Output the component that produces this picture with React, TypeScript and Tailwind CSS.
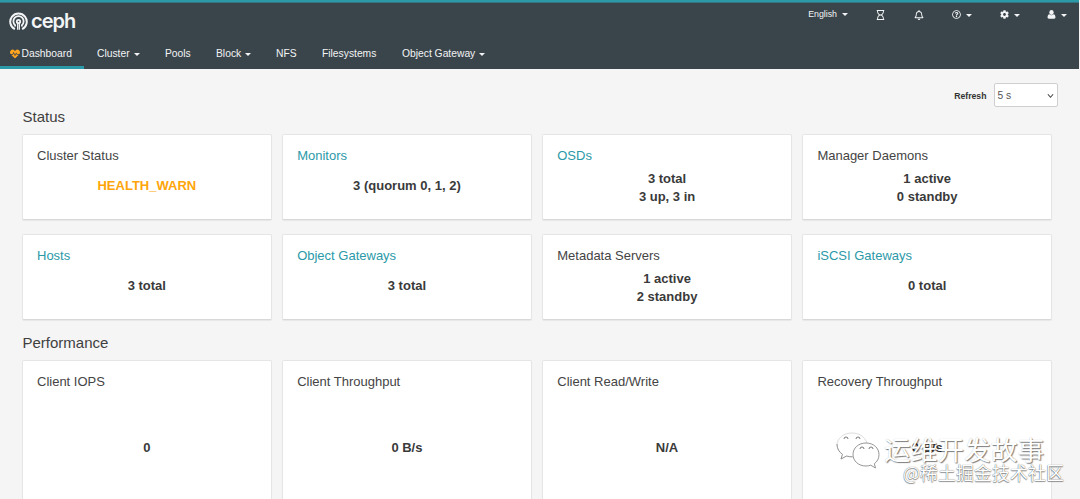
import { ReactNode } from "react";
import { FaCog, FaHeartbeat, FaRegBell, FaRegHourglass, FaRegQuestionCircle } from "react-icons/fa";

type CardProps = {
  title: string;
  lines: string[];
  link?: boolean;
  warn?: boolean;
  tall?: boolean;
};

const statusCards: CardProps[] = [
  { title: "Cluster Status", lines: ["HEALTH_WARN"], warn: true },
  { title: "Monitors", lines: ["3 (quorum 0, 1, 2)"], link: true },
  { title: "OSDs", lines: ["3 total", "3 up, 3 in"], link: true },
  { title: "Manager Daemons", lines: ["1 active", "0 standby"] },
  { title: "Hosts", lines: ["3 total"], link: true },
  { title: "Object Gateways", lines: ["3 total"], link: true },
  { title: "Metadata Servers", lines: ["1 active", "2 standby"] },
  { title: "iSCSI Gateways", lines: ["0 total"], link: true },
];

const performanceCards: CardProps[] = [
  { title: "Client IOPS", lines: ["0"], tall: true },
  { title: "Client Throughput", lines: ["0 B/s"], tall: true },
  { title: "Client Read/Write", lines: ["N/A"], tall: true },
  { title: "Recovery Throughput", lines: ["0 B/s"], tall: true },
];

function Caret({ className = "" }: { className?: string }) {
  return <span className={`inline-block border-x-[3px] border-t-[3px] border-x-transparent border-t-current ${className}`} />;
}

function NavItem({ label, caret, className = "" }: { label: string; caret?: boolean; className?: string }) {
  return (
    <a className={`flex items-center pt-[2px] whitespace-nowrap ${className}`}>
      {label}
      {caret && <Caret className="ml-[4px] mt-px" />}
    </a>
  );
}

function CephMark() {
  return (
    <svg viewBox="0 0 20 20" className="h-[19px] w-[19px]" fill="none" stroke="currentColor" strokeWidth="2.1">
      <path d="M6.2 18.1A8.7 8.7 0 1 1 13.8 18.1" />
      <path d="M6.4 15.2V13.8A5.4 5.4 0 1 1 13.6 13.8V15.2" strokeWidth="1.9" />
      <path d="M9.1 18.6V12.4M10.9 18.6V12.4" strokeWidth="1.3" />
      <circle cx="10" cy="10" r="1.8" strokeWidth="1.9" />
    </svg>
  );
}

function UserIcon() {
  return (
    <svg viewBox="0 0 16 16" className="ml-[27px] h-[9px] w-[9px]" fill="currentColor">
      <ellipse cx="8" cy="4.600" rx="3.900" ry="4.400" />
      <path d="M4.300 7.600C2 8 1 10 1 13c0 1.800.8 2.600 2.300 2.600h9.400c1.500 0 2.300-.8 2.300-2.600 0-3-1-5-3.300-5.400-2 2.200-5.400 2.200-7.400 0z" />
    </svg>
  );
}

function Card({ title, lines, link, warn, tall }: CardProps) {
  return (
    <div className={`flex flex-col rounded-[2px] border border-[#e5e5e5] border-b-[#d8d8d8] bg-white px-[14px] pt-[12px] shadow-[0_1px_1px_rgba(3,3,3,0.06)] ${tall ? "h-[180px]" : "h-[86px]"}`}>
      <h3 className={`text-[13px] leading-[18px] ${link ? "text-[#2b99a8]" : "text-[#444]"}`}>{title}</h3>
      <div className={`flex flex-col items-center justify-center text-[13px] leading-[18px] font-bold ${tall ? "mt-[30px] h-[54px]" : "h-[43px]"} ${lines.length > 1 ? "pt-[3px]" : tall ? "" : "pb-px"} ${warn ? "text-[#ffa50a]" : "text-[#3a3a3a]"}`}>
        {lines.map(line => (
          <span key={line}>{line}</span>
        ))}
      </div>
    </div>
  );
}

function Section({ title, children }: { title: string; children: ReactNode }) {
  return (
    <section>
      <h2 className="mb-[7px] pl-[0.5px] text-[15px] leading-[20px] text-[#3f3f3f]">{title}</h2>
      <div className="grid w-[1030px] grid-cols-4 gap-x-[10.500px] gap-y-[14px]">{children}</div>
    </section>
  );
}

export default function App() {
  return (
    <div className="relative h-[499px] w-[1080px] overflow-hidden bg-[#f5f5f5] font-['Liberation_Sans',Arial,sans-serif]">
      <header className="mr-px flex h-[69px] flex-col border-t-2 border-[#2b99a8] bg-[#3a444b] text-[#f2f4f5]">
        <div className="flex h-[37px] justify-between border-t border-[#33747f]">
          <div className="flex items-start pl-[9px] pt-[9px]">
            <CephMark />
            <span className="ml-[3px] mt-[-2px] font-['Inter',sans-serif] text-[20px] leading-[22px] font-semibold tracking-[-1px]">ceph</span>
          </div>
          <div className="flex h-[23px] items-center text-[8.8px]">
            <span>English</span>
            <Caret className="ml-[5px]" />
            <FaRegHourglass className="ml-[28px] h-[10px] w-[9px]" />
            <FaRegBell className="ml-[29px] h-[10px] w-[10px]" />
            <FaRegQuestionCircle className="ml-[28px] h-[9px] w-[9px]" />
            <Caret className="ml-[5px] mt-px" />
            <FaCog className="ml-[28px] h-[9px] w-[9px]" />
            <Caret className="ml-[5px] mt-px" />
            <UserIcon />
            <Caret className="ml-[5px] mr-[12px] mt-px" />
          </div>
        </div>
        <nav className="flex flex-1 text-[10.3px]">
          <a className="flex w-[84px] items-center border-b-[3px] border-[#2b99a8] pt-[2px] pl-[9.500px]">
            <FaHeartbeat className="mr-[2px] h-[10px] w-[10px] text-[#ffa51f]" />
            Dashboard
          </a>
          <NavItem label="Cluster" caret className="mb-[3px] ml-[13px] w-[68px]" />
          <NavItem label="Pools" className="mb-[3px] w-[51px]" />
          <NavItem label="Block" caret className="mb-[3px] w-[60px]" />
          <NavItem label="NFS" className="mb-[3px] w-[46px]" />
          <NavItem label="Filesystems" className="mb-[3px] w-[80px]" />
          <NavItem label="Object Gateway" caret className="mb-[3px]" />
        </nav>
      </header>

      <main className="pl-[22px]">
        <div className="flex h-[38px] items-start justify-end pr-[22px] pt-[14px]">
          <span className="mr-[7.500px] mt-[7px] text-[8.7px] leading-[12px] font-bold text-[#333]">Refresh</span>
          <div className="flex h-[24px] w-[64px] items-center justify-between rounded-[2px] border border-[#cfcfcf] bg-white pt-px pr-[3px] pl-[2.500px] text-[10.3px] text-[#555]">
            5 s
            <svg viewBox="0 0 8 6" className="h-[6px] w-[7px]" fill="none" stroke="#444" strokeWidth="1.2">
              <path d="M1 1l3 3.4L7 1" />
            </svg>
          </div>
        </div>
        <div className="flex flex-col gap-[13px]">
          <Section title="Status">
            {statusCards.map(card => (
              <Card key={card.title} {...card} />
            ))}
          </Section>
          <Section title="Performance">
            {performanceCards.map(card => (
              <Card key={card.title} {...card} />
            ))}
          </Section>
        </div>
      </main>

      {/* Watermarks */}
      <div className="absolute left-[836px] top-[431px] flex items-center text-white">
        <svg viewBox="0 0 44 38" className="h-[38px] w-[44px] overflow-visible" fill="white" stroke="#8a8a8a" strokeWidth="0.6">
          <path d="M16 2C7.500 2 1 7.500 1 14c0 4 2.200 7.200 5.500 9.300L5 28l5.500-3c2 .6 4 .8 6 .8L31 12C28.500 5 22.500 2 16 2z" stroke="#c4c4c4" />
          <path d="M1 13c0 4.500 2.200 8.200 5.500 10.300L5 28l5.500-3c2 .6 4 .8 6 .8" strokeWidth="0.9" />
          <path d="M30 12c-7.500 0-13 5-13 11.500s5.500 11.500 13 11.500c1.700 0 3.300-.3 4.800-.8L39.500 37l-1.200-4.300C41.300 30.600 43 27.500 43 23.500c0-6.500-5.500-11.500-13-11.500z" strokeWidth="0.9" />
          <g fill="none" stroke="#777" strokeWidth="1">
            <path d="M8 8a2 2 0 0 1 4 0M20 8a2 2 0 0 1 4 0M24 18a2 2 0 0 1 4 0M33 18a2 2 0 0 1 4 0" />
          </g>
        </svg>
        <span className="mt-[-2px] ml-[4px] whitespace-nowrap font-['Noto_Sans_CJK_SC',sans-serif] text-[26.700px] leading-[38px] font-normal [text-shadow:1px_1px_1px_rgba(0,0,0,0.5),0_0_1px_rgba(0,0,0,0.25)]">运维开发故事</span>
      </div>
      <div className="absolute left-[903px] top-[460px] whitespace-nowrap font-['Noto_Sans_CJK_SC',sans-serif] text-[18px] leading-[24px] text-white [text-shadow:0_1px_1px_rgba(0,0,0,0.4),0_0_1px_rgba(0,0,0,0.65)]">
        @稀土掘金技术社区
      </div>
    </div>
  );
}
